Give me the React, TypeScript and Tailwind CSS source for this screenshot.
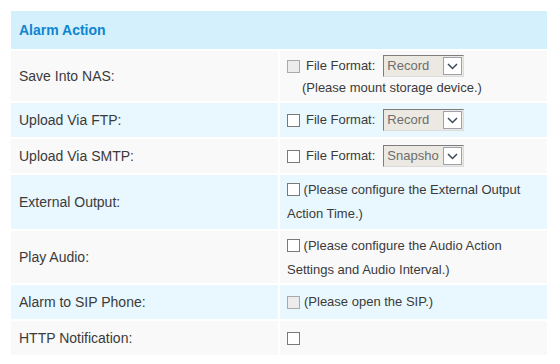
import type { ReactNode } from "react";

const font = { fontFamily: '"Liberation Sans", Arial, sans-serif' };

function Box({ disabled = false }: { disabled?: boolean }) {
  return (
    <span
      className={`inline-block h-[13px] w-[13px] shrink-0 border align-[-2px] ${
        disabled ? "border-[#a9a9a9] bg-[#ececec]" : "border-[#7a7a7a] bg-white"
      }`}
    />
  );
}

function FakeSelect({ value }: { value: string }) {
  return (
    <span className="ml-[8px] inline-flex h-[22px] w-[81px] items-center border border-t-[#7d7d7d] border-l-[#7d7d7d] border-r-[#dcdcdc] border-b-[#dcdcdc] bg-[#ebe9e2] align-middle">
      <span className="flex-1 pl-[3px]">
        <span className="block w-[52px] overflow-hidden whitespace-nowrap text-[13px] text-[#6d6d6d]">
          {value}
        </span>
      </span>
      <span className="mr-[1px] flex h-[18px] w-[19px] items-center justify-center border border-[#9aa3ad] bg-white">
        <svg width="11" height="7" viewBox="0 0 11 7">
          <path d="M1 1 L5.5 5.5 L10 1" fill="none" stroke="#3c4a5a" strokeWidth="1.5" />
        </svg>
      </span>
    </span>
  );
}

function Row({
  label,
  h,
  alt,
  top = false,
  children,
}: {
  label: string;
  h: string;
  alt: boolean;
  top?: boolean;
  children: ReactNode;
}) {
  const bg = alt ? "bg-[#e9f7fe]" : "bg-[#f9f9f9]";
  return (
    <>
      <div className={`flex items-center pl-[8px] text-[14px] text-[#3b3b3b] ${h} ${bg}`}>{label}</div>
      <div
        className={`flex flex-col pl-[7px] pr-[6px] text-[13px] text-[#3b3b3b] ${
          top ? "justify-start pt-[3px]" : "justify-center"
        } ${h} ${bg}`}
      >
        {children}
      </div>
    </>
  );
}

function FormatLine({ value, disabled = false }: { value: string; disabled?: boolean }) {
  return (
    <div className="flex items-center whitespace-nowrap">
      <Box disabled={disabled} />
      <span className="ml-[6px]">File Format:</span>
      <FakeSelect value={value} />
    </div>
  );
}

export default function App() {
  return (
    <div className="min-h-[364px] bg-white pt-[11px] pl-[11px]" style={font}>
      <div className="grid w-[536px] grid-cols-2 gap-[2px]">
        <div className="col-span-2 flex h-[38px] items-center bg-[#d4f0fd] pl-[8px] text-[14px] font-bold text-[#0f84cf]">
          Alarm Action
        </div>

        <Row label="Save Into NAS:" h="h-[50px]" alt={false}>
          <FormatLine value="Record" disabled />
          <div className="mt-[1px] pl-[15px] leading-[19px]">(Please mount storage device.)</div>
        </Row>

        <Row label="Upload Via FTP:" h="h-[34px]" alt>
          <FormatLine value="Record" />
        </Row>

        <Row label="Upload Via SMTP:" h="h-[34px]" alt={false}>
          <FormatLine value="Snapshot" />
        </Row>

        <Row label="External Output:" h="h-[54px]" alt top>
          <div className="leading-[24px]">
            <Box /> (Please configure the External Output
            <br />
            Action Time.)
          </div>
        </Row>

        <Row label="Play Audio:" h="h-[52px]" alt={false} top>
          <div className="leading-[24px]">
            <Box /> (Please configure the Audio Action
            <br />
            Settings and Audio Interval.)
          </div>
        </Row>

        <Row label="Alarm to SIP Phone:" h="h-[34px]" alt>
          <div className="flex items-center">
            <Box disabled />
            <span className="ml-[4px]">(Please open the SIP.)</span>
          </div>
        </Row>

        <Row label="HTTP Notification:" h="h-[34px]" alt={false}>
          <div className="flex items-center">
            <Box />
          </div>
        </Row>
      </div>
    </div>
  );
}
